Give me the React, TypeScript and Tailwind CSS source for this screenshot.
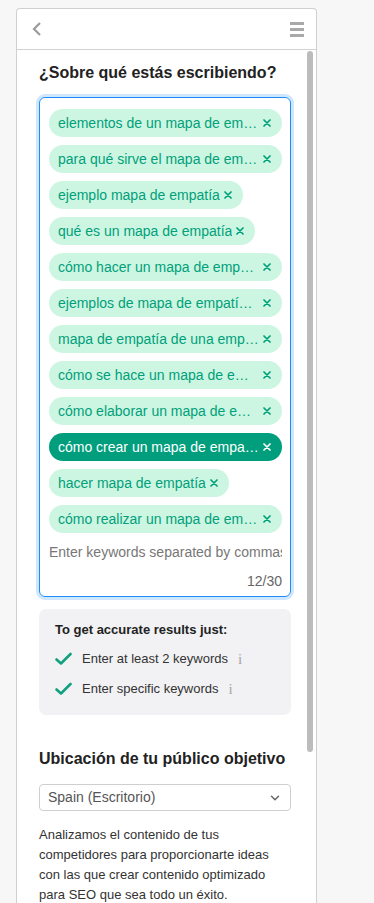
import { ChevronDown } from "lucide-react"

// labels as the list shows them; long ones are cut where the reference cuts them
const keywords = [
  { label: "elementos de un mapa de em…", cut: true },
  { label: "para qué sirve el mapa de em…", cut: true },
  { label: "ejemplo mapa de empatía", cut: false },
  { label: "qué es un mapa de empatía", cut: false },
  { label: "cómo hacer un mapa de emp…", cut: true },
  { label: "ejemplos de mapa de empatí…", cut: true },
  { label: "mapa de empatía de una emp…", cut: true },
  { label: "cómo se hace un mapa de e…", cut: true },
  { label: "cómo elaborar un mapa de e…", cut: true },
  { label: "cómo crear un mapa de empa…", cut: true },
  { label: "hacer mapa de empatía", cut: false },
  { label: "cómo realizar un mapa de em…", cut: true },
]

function Chip({ label, cut, active }: { label: string; cut: boolean; active?: boolean }) {
  return (
    <div
      className={`inline-flex items-center h-[28px] pl-[9px] pr-[11px] rounded-full text-[14px] ${
        active ? "bg-[#009e7c] text-white" : "bg-[#cdf6e2] text-[#00a07a]"
      }`}
    >
      <span className={`${cut ? "w-[200px]" : ""} whitespace-nowrap overflow-hidden leading-[28px]`}>{label}</span>
      <svg width="8" height="8" viewBox="0 0 8 8" className={`${cut ? "ml-[5px]" : "ml-[4px]"} shrink-0`}>
        <path d="M1 1 L7 7 M7 1 L1 7" stroke="currentColor" strokeWidth="1.7" strokeLinecap="round" />
      </svg>
    </div>
  )
}

function Check() {
  return (
    <svg width="17" height="14" viewBox="0 0 17 14" className="shrink-0">
      <path d="M1.5 7.5 L6 11.5 L15.5 2" fill="none" stroke="#11a17f" strokeWidth="2.6" strokeLinecap="round" strokeLinejoin="round" />
    </svg>
  )
}

function Info() {
  return (
    <span className="ml-[10px] text-[#a6a6a6] text-[15px] leading-none" style={{ fontFamily: '"Liberation Serif", serif' }}>
      i
    </span>
  )
}

export default function App() {
  return (
    <div className="min-h-[903px] bg-[#f7f7f7] pt-[8px] pl-[16px]" style={{ fontFamily: '"Liberation Sans", Arial, sans-serif' }}>
      <div className="w-[301px] h-[895px] bg-white border border-[#d0d0d0] border-b-0 rounded-t-[4px] flex flex-col overflow-hidden">
        <div className="h-[41px] shrink-0 border-b border-[#d2d2d2] flex items-center justify-between pl-[14px] pr-[12px]">
          <svg width="12" height="16" viewBox="0 0 12 16">
            <path d="M9 2 L3 8 L9 14" fill="none" stroke="#9b9b9b" strokeWidth="2.2" />
          </svg>
          <div className="flex flex-col gap-[3px] w-[14px]">
            <div className="h-[3px] bg-[#a9a9a9]" />
            <div className="h-[3px] bg-[#a9a9a9]" />
            <div className="h-[3px] bg-[#a9a9a9]" />
          </div>
        </div>
        <div className="flex flex-1 min-h-0">
          <div className="flex-1 pl-[22px] pt-[12px]">
            <h1 className="text-[16px] font-bold text-[#222] leading-[22px]">¿Sobre qué estás escribiendo?</h1>
            <div className="mt-[13px] w-[252px] h-[500px] border border-[#1d8cf8] rounded-[6px] ring-[3px] ring-[#cfe6ff] pl-[9px] pr-[8px] pt-[11px] flex flex-col">
              <div className="flex flex-col items-start gap-[8px]">
                {keywords.map((k, i) => (
                  <Chip key={k.label} label={k.label} cut={k.cut} active={i === 9} />
                ))}
              </div>
              <div className="mt-[10px] text-[14px] text-[#777] whitespace-nowrap overflow-hidden leading-[18px]">
                Enter keywords separated by commas
              </div>
              <div className="mt-[11px] text-right text-[14px] text-[#666] leading-[18px]">12/30</div>
            </div>
            <div className="mt-[12px] w-[252px] h-[106px] bg-[#f2f2f4] rounded-[7px] pl-[16px] pt-[13px]">
              <div className="text-[13px] font-bold text-[#222] leading-[16px]">To get accurate results just:</div>
              <div className="mt-[13px] flex items-center text-[13px] text-[#333] leading-[16px]">
                <Check />
                <span className="ml-[10px]">Enter at least 2 keywords</span>
                <Info />
              </div>
              <div className="mt-[14px] flex items-center text-[13px] text-[#333] leading-[16px]">
                <Check />
                <span className="ml-[10px]">Enter specific keywords</span>
                <Info />
              </div>
            </div>
            <h2 className="mt-[33px] text-[16px] font-bold text-[#222] leading-[22px]">Ubicación de tu público objetivo</h2>
            <div className="mt-[14px] w-[252px] h-[27px] border border-[#cfcfcf] rounded-[4px] flex items-center justify-between pl-[8px] pr-[8px]">
              <span className="text-[14px] text-[#555]">Spain (Escritorio)</span>
              <ChevronDown size={14} color="#666" strokeWidth={2.5} />
            </div>
            <p className="mt-[14px] w-[252px] text-[13px] text-[#333] leading-[20px]">
              Analizamos el contenido de tus competidores para proporcionarte ideas con las que crear contenido optimizado para SEO que sea todo un éxito.
            </p>
          </div>
          <div className="w-[9px] shrink-0 pt-[1px]">
            <div className="w-[6px] h-[701px] bg-[#bcbcbc] rounded-full" />
          </div>
        </div>
      </div>
    </div>
  )
}
